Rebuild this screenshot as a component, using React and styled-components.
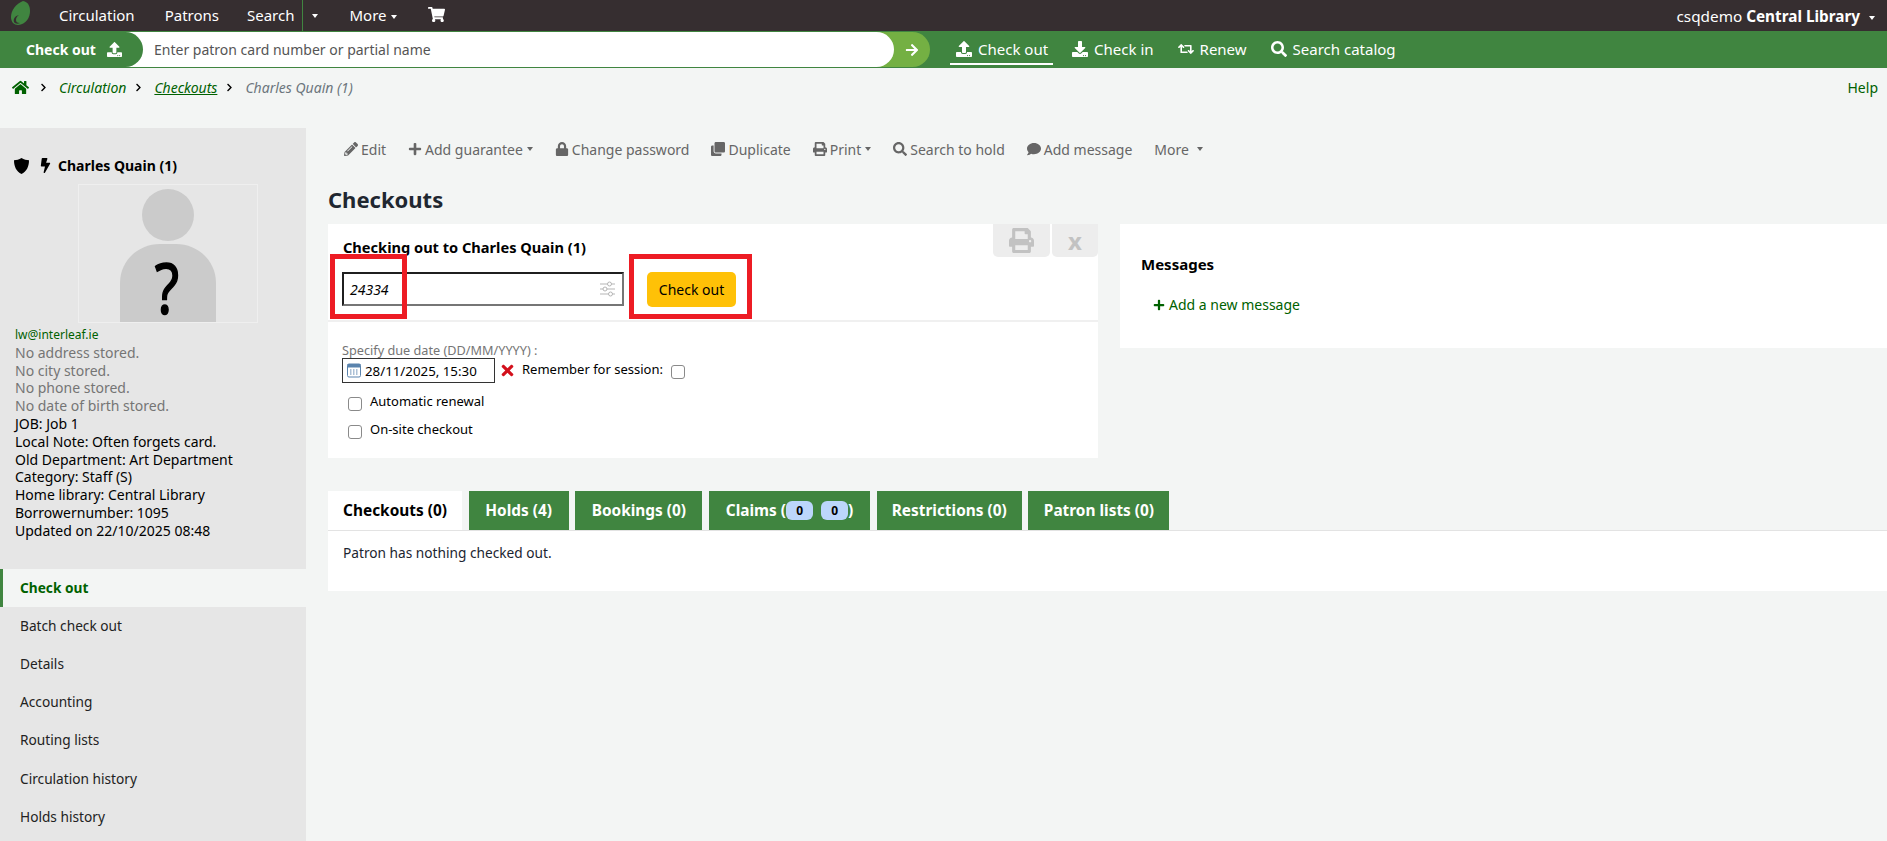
import React from "react";
import styled, { createGlobalStyle } from "styled-components";
import {
  FaHome,
  FaBolt,
  FaShoppingCart,
  FaUpload,
  FaDownload,
  FaRetweet,
  FaSearch,
  FaArrowRight,
  FaPencilAlt,
  FaPlus,
  FaLock,
  FaClone,
  FaPrint,
  FaComment,
  FaTimes,
  FaChevronRight,
} from "react-icons/fa";

const GlobalStyle = createGlobalStyle`
  html, body {
    margin: 0;
    height: 100%;
    overflow: hidden;
    background: #f3f5f4;
    font-family: "Noto Sans", sans-serif;
    font-size: 14px;
    color: #000;
  }
`;

const Caret = styled.span`
  display: inline-block;
  width: 0;
  height: 0;
  margin-left: ${(p) => p.$gap || 4}px;
  border-top: 4px solid currentColor;
  border-left: 3.5px solid transparent;
  border-right: 3.5px solid transparent;
  vertical-align: 2px;
`;

const TopBar = styled.nav`
  display: flex;
  align-items: center;
  height: 31px;
  background: #362e30;
  color: #fff;
  font-size: 15px;
  padding: 0 12px 0 11px;
`;

const Logo = styled.svg`
  width: 19px;
  height: 24px;
  margin-right: 29px;
  margin-top: -6px;
`;

const TopLink = styled.span`
  margin-right: ${(p) => p.$gap}px;
  line-height: 31px;
`;

const SplitCaret = styled.span`
  display: flex;
  align-items: center;
  height: 31px;
  border-left: 1px solid #408540;
  margin: 0 31px 0 -22px;
  padding-left: 5px;
`;

const CartIcon = styled(FaShoppingCart)`
  font-size: 17px;
  margin-top: -3px;
`;

const LibraryMenu = styled.span`
  margin-left: auto;
  font-size: 15.3px;
  b {
    font-weight: 700;
  }
`;

const SearchBar = styled.div`
  display: flex;
  align-items: center;
  height: 37px;
  background: #408540;
  color: #fff;
`;

const SearchForm = styled.div`
  display: flex;
  align-items: stretch;
  width: 930px;
  height: 35px;
  background: #74b043;
  border-radius: 0 18px 18px 0;
`;

const SearchLabel = styled.div`
  display: flex;
  align-items: center;
  gap: 11px;
  width: 143px;
  padding-left: 26px;
  box-sizing: border-box;
  background: #408540;
  font-weight: 700;
  font-size: 14px;
  border-radius: 0 18px 18px 0;
  margin-right: -18px;
  position: relative;
  z-index: 1;
  svg {
    font-size: 15px;
  }
`;

const SearchInput = styled.div`
  width: 769px;
  padding-left: 29px;
  box-sizing: border-box;
  background: #fff;
  border-radius: 0 18px 18px 0;
  line-height: 35px;
  color: #555;
  font-size: 14px;
`;

const SearchGo = styled.div`
  display: flex;
  align-items: center;
  justify-content: center;
  flex: 1;
  font-size: 14px;
`;

const QuickLinks = styled.div`
  display: flex;
  align-items: center;
  margin-left: 20px;
  gap: 13px;
  font-size: 15px;
`;

const QuickLink = styled.span`
  display: flex;
  align-items: center;
  gap: 6px;
  padding: 1px 5px 0 6px;
  height: 27px;
  border-bottom: 2px solid ${(p) => (p.$active ? "#fff" : "transparent")};
  svg {
    font-size: 16px;
  }
`;

const Crumbs = styled.div`
  display: flex;
  align-items: center;
  height: 60px;
  padding: 0 9px 22px 12px;
  box-sizing: border-box;
  font-size: 14px;
  font-style: italic;
  color: #006100;
`;

const Chevron = styled(FaChevronRight)`
  font-size: 9px;
  color: #000;
  margin: 0 11px 0 8px;
`;

const HomeIcon = styled(FaHome)`
  font-size: 17px;
  color: #006100;
  margin-right: 2px;
`;

const CrumbLink = styled.span`
  text-decoration: ${(p) => (p.$underline ? "underline" : "none")};
`;

const CrumbCurrent = styled.span`
  color: #6c757d;
`;

const HelpLink = styled.span`
  margin-left: auto;
  font-style: normal;
`;

const Layout = styled.div`
  display: flex;
  align-items: stretch;
  height: 713px;
`;

const Sidebar = styled.aside`
  flex: 0 0 306px;
  background: #e6e6e6;
  padding-top: 28px;
  box-sizing: border-box;
`;

const PatronName = styled.h5`
  display: flex;
  align-items: center;
  margin: 0 0 9px 14px;
  font-size: 14px;
  font-weight: 700;
  line-height: 19px;
  svg {
    margin-right: 5px;
  }
`;

const ShieldIcon = styled.svg`
  width: 15px;
  height: 16px;
  && {
    margin-right: 9px;
  }
`;

const BoltIcon = styled(FaBolt)`
  font-size: 15px;
`;

const Photo = styled.div`
  width: 180px;
  height: 139px;
  margin-left: 78px;
  border: 1px solid #efefef;
  box-sizing: border-box;
  svg {
    display: block;
    overflow: visible;
  }
`;

const PatronInfo = styled.div`
  margin: 3px 0 0 15px;
  font-size: 14px;
  line-height: 17.8px;
`;

const Email = styled.div`
  color: #006100;
  font-size: 12px;
`;

const Missing = styled.div`
  color: #757575;
`;

const SideMenu = styled.ul`
  list-style: none;
  margin: 29px 0 0;
  padding: 0;
`;

const SideItem = styled.li`
  height: 38.2px;
  line-height: 38px;
  padding-left: ${(p) => (p.$active ? 17 : 20)}px;
  font-size: 13.7px;
  box-sizing: border-box;
  color: ${(p) => (p.$active ? "#006100" : "#222")};
  font-weight: ${(p) => (p.$active ? 700 : 400)};
  background: ${(p) => (p.$active ? "#f3f5f4" : "transparent")};
  border-left: ${(p) => (p.$active ? "3px solid #408540" : "0")};
`;

const Main = styled.main`
  flex: 1;
  min-width: 0;
  padding-left: 22px;
`;

const Toolbar = styled.div`
  display: flex;
  align-items: center;
  height: 20px;
  margin: 11px 0 0 16px;
  gap: 22px;
  color: #666;
  font-size: 14px;
`;

const ToolButton = styled.span`
  display: flex;
  align-items: center;
  gap: 3px;
  svg {
    font-size: 14px;
  }
`;

const Title = styled.h1`
  margin: 25px 0 10px;
  font-size: 22px;
  line-height: 30px;
  font-weight: 700;
  color: #1f2730;
`;

const Columns = styled.div`
  display: flex;
  align-items: flex-start;
  gap: 22px;
`;

const CheckoutPanel = styled.section`
  flex: 0 0 770px;
  background: #fff;
  position: relative;
`;

const PanelTop = styled.div`
  height: 98px;
  padding: 13px 0 0 14px;
  box-sizing: border-box;
  border-bottom: 2px solid #f0f0f0;
`;

const PanelTitle = styled.div`
  font-size: 14.6px;
  font-weight: 700;
  line-height: 20px;
  margin: 0 0 15px 1px;
`;

const BarcodeRow = styled.div`
  display: flex;
  align-items: flex-start;
  gap: 23px;
`;

const BarcodeInput = styled.div`
  display: flex;
  align-items: center;
  justify-content: space-between;
  width: 282px;
  height: 34px;
  padding: 0 7px 0 6px;
  box-sizing: border-box;
  border: 2px solid;
  border-color: #1f1f1f #767676 #767676 #1f1f1f;
  font-style: italic;
  font-size: 14px;
`;

const AmberButton = styled.div`
  width: 89px;
  height: 35px;
  background: #ffc107;
  border-radius: 5px;
  text-align: center;
  line-height: 35px;
  font-size: 14px;
`;

const CornerTabs = styled.div`
  position: absolute;
  top: 0;
  right: 0;
  display: flex;
  gap: 2px;
`;

const CornerTab = styled.div`
  display: flex;
  align-items: center;
  justify-content: center;
  width: ${(p) => p.$w}px;
  height: 33px;
  background: #ededed;
  border-radius: 0 0 5px 5px;
  color: #c2c2c2;
  font-size: 24px;
  line-height: 28px;
  font-weight: 700;
  svg {
    font-size: 25px;
  }
`;

const Annotation = styled.div`
  position: absolute;
  top: 30px;
  left: ${(p) => p.$left}px;
  width: ${(p) => p.$w}px;
  height: 65px;
  border: 5px solid #ed1c24;
  box-sizing: border-box;
`;

const DueSection = styled.div`
  height: 136px;
  padding: 21px 0 0 14px;
  box-sizing: border-box;
`;

const DueLabel = styled.div`
  font-size: 12.7px;
  line-height: 15px;
  color: #757575;
`;

const DueRow = styled.div`
  display: flex;
  align-items: flex-start;
`;

const DateInput = styled.div`
  display: flex;
  align-items: center;
  gap: 4px;
  width: 153px;
  height: 25px;
  padding-left: 4px;
  box-sizing: border-box;
  border: 1px solid #333;
  font-size: 13.3px;
`;

const ClearIcon = styled(FaTimes)`
  color: #d3101c;
  font-size: 17px;
  margin: 4px 6px 0 4px;
`;

const Check = styled.span`
  flex: none;
  display: block;
  width: 14px;
  height: 14px;
  box-sizing: border-box;
  border: 1px solid #8a8a8a;
  border-radius: 3px;
  background: #fff;
  margin: ${(p) => p.$m || 0};
`;

const CheckLabel = styled.span`
  font-size: 13px;
  line-height: 18px;
  margin-top: ${(p) => p.$top || 0}px;
`;

const CheckRow = styled.div`
  display: flex;
  align-items: flex-start;
  gap: 8px;
  height: 28px;
  margin: ${(p) => p.$top || 0}px 0 0 6px;
`;

const MessagesPanel = styled.section`
  flex: 1;
  height: 124px;
  background: #fff;
  padding: 29px 0 0 21px;
  box-sizing: border-box;
`;

const MessagesTitle = styled.div`
  font-size: 15px;
  font-weight: 700;
  line-height: 22px;
`;

const AddMessage = styled.div`
  display: flex;
  align-items: center;
  gap: 4px;
  margin: 20px 0 0 12px;
  color: #006100;
  font-size: 14px;
  line-height: 20px;
  svg {
    font-size: 12px;
  }
`;

const Tabs = styled.div`
  display: flex;
  align-items: flex-end;
  gap: 6.7px;
  margin-top: 33px;
  height: 39px;
  border-bottom: 1px solid #e3e3e3;
`;

const Tab = styled.div`
  display: flex;
  align-items: center;
  justify-content: center;
  width: ${(p) => p.$w}px;
  height: 39px;
  box-sizing: border-box;
  font-size: 15.4px;
  font-weight: 700;
  color: ${(p) => (p.$active ? "#000" : "#fff")};
  background: ${(p) => (p.$active ? "#fff" : "#408540")};
`;

const Badge = styled.span`
  display: inline-block;
  width: 27px;
  height: 19px;
  line-height: 19px;
  text-align: center;
  border-radius: 6px;
  background: #bcd6fb;
  color: #000;
  font-size: 12px;
  margin-right: ${(p) => p.$mr || 0}px;
`;

const TabBody = styled.div`
  height: 60px;
  background: #fff;
  padding: 12px 15px 0;
  box-sizing: border-box;
  font-size: 13.7px;
  line-height: 20px;
  color: #1b2530;
`;

const tools = [
  { icon: <FaPencilAlt />, label: "Edit" },
  { icon: <FaPlus />, label: "Add guarantee", caret: true },
  { icon: <FaLock />, label: "Change password" },
  { icon: <FaClone />, label: "Duplicate" },
  { icon: <FaPrint />, label: "Print", caret: true },
  { icon: <FaSearch />, label: "Search to hold" },
  { icon: <FaComment />, label: "Add message" },
];

const menu = [
  "Batch check out",
  "Details",
  "Accounting",
  "Routing lists",
  "Circulation history",
  "Holds history",
];

function App() {
  return (
    <>
      <GlobalStyle />
      <TopBar>
        <Logo viewBox="0 0 19 24">
          <path
            d="M12 0C5 3 0 9 0 16c0 5 3 8 7 8 8-1 12-7 12-14 0-5-2-9-7-10z"
            fill="#408540"
          />
          <path d="M8 14c-4 1-6 4-5 7 1 2 4 2 6 1-3 0-4-1-4-3 0-2 1-4 3-5z" fill="#362e30" />
        </Logo>
        <TopLink $gap={30}>Circulation</TopLink>
        <TopLink $gap={28}>Patrons</TopLink>
        <TopLink $gap={30}>Search</TopLink>
        <SplitCaret>
          <Caret $gap={0} />
        </SplitCaret>
        <TopLink $gap={31}>
          More
          <Caret />
        </TopLink>
        <CartIcon />
        <LibraryMenu>
          csqdemo <b>Central Library</b>
          <Caret $gap={9} />
        </LibraryMenu>
      </TopBar>

      <SearchBar>
        <SearchForm>
          <SearchLabel>
            Check out <FaUpload />
          </SearchLabel>
          <SearchInput>Enter patron card number or partial name</SearchInput>
          <SearchGo>
            <FaArrowRight />
          </SearchGo>
        </SearchForm>
        <QuickLinks>
          <QuickLink $active>
            <FaUpload /> Check out
          </QuickLink>
          <QuickLink>
            <FaDownload /> Check in
          </QuickLink>
          <QuickLink>
            <FaRetweet /> Renew
          </QuickLink>
          <QuickLink>
            <FaSearch /> Search catalog
          </QuickLink>
        </QuickLinks>
      </SearchBar>

      <Crumbs>
        <HomeIcon />
        <Chevron />
        <CrumbLink>Circulation</CrumbLink>
        <Chevron />
        <CrumbLink $underline>Checkouts</CrumbLink>
        <Chevron />
        <CrumbCurrent>Charles Quain (1)</CrumbCurrent>
        <HelpLink>Help</HelpLink>
      </Crumbs>

      <Layout>
        <Sidebar>
          <PatronName>
            <ShieldIcon viewBox="0 0 15 16">
              <path d="M7.500 0C10 1.500 12.500 2.200 15 2.300 15 9 12.500 13.500 7.500 16 2.500 13.500 0 9 0 2.300 2.500 2.200 5 1.500 7.500 0z" />
            </ShieldIcon>
            <BoltIcon />
            Charles Quain (1)
          </PatronName>
          <Photo>
            <svg width="178" height="137" viewBox="0 0 178 137">
              <circle cx="89" cy="30" r="26" fill="#cbcbcb" />
              <path
                d="M41 137V98c0-22 18-39 40-39h16c22 0 40 17 40 39v39z"
                fill="#cbcbcb"
              />
              <text
                transform="translate(88 129) scale(0.8 1)"
                fontSize="70"
                textAnchor="middle"
                stroke="#000"
                strokeWidth="1.5"
                fontFamily="Noto Sans, sans-serif"
              >
                ?
              </text>
            </svg>
          </Photo>
          <PatronInfo>
            <Email>lw@interleaf.ie</Email>
            <Missing>No address stored.</Missing>
            <Missing>No city stored.</Missing>
            <Missing>No phone stored.</Missing>
            <Missing>No date of birth stored.</Missing>
            <div>JOB: Job 1</div>
            <div>Local Note: Often forgets card.</div>
            <div>Old Department: Art Department</div>
            <div>Category: Staff (S)</div>
            <div>Home library: Central Library</div>
            <div>Borrowernumber: 1095</div>
            <div>Updated on 22/10/2025 08:48</div>
          </PatronInfo>
          <SideMenu>
            <SideItem $active>Check out</SideItem>
            {menu.map((item) => (
              <SideItem key={item}>{item}</SideItem>
            ))}
          </SideMenu>
        </Sidebar>

        <Main>
          <Toolbar>
            {tools.map((t) => (
              <ToolButton key={t.label}>
                {t.icon}
                {t.label}
                {t.caret && <Caret $gap={1} />}
              </ToolButton>
            ))}
            <ToolButton>
              More
              <Caret $gap={5} />
            </ToolButton>
          </Toolbar>
          <Title>Checkouts</Title>
          <Columns>
            <CheckoutPanel>
              <PanelTop>
                <PanelTitle>Checking out to Charles Quain (1)</PanelTitle>
                <BarcodeRow>
                  <BarcodeInput>
                    24334
                    <svg width="15" height="16" viewBox="0 0 15 16" fill="#fff" stroke="#b5b5b5">
                      <path d="M0 3h15M0 8h15M0 13h15" />
                      <circle cx="9.500" cy="3" r="2" />
                      <circle cx="5" cy="8" r="2" />
                      <circle cx="10.500" cy="13" r="2" />
                    </svg>
                  </BarcodeInput>
                  <AmberButton>Check out</AmberButton>
                </BarcodeRow>
              </PanelTop>
              <CornerTabs>
                <CornerTab $w={57}>
                  <FaPrint />
                </CornerTab>
                <CornerTab $w={46}>x</CornerTab>
              </CornerTabs>
              <Annotation $left={2} $w={77} />
              <Annotation $left={301} $w={123} />
              <DueSection>
                <DueLabel>Specify due date (DD/MM/YYYY) :</DueLabel>
                <DueRow>
                  <DateInput>
                    <svg width="14" height="15" viewBox="0 0 14 15">
                      <rect x="0.5" y="1" width="13" height="13" rx="1.5" fill="#fff" stroke="#5a83ad" />
                      <rect x="0.5" y="1" width="13" height="3.5" fill="#5a83ad" />
                      <path
                        d="M3 7h1.500M6 7h1.500M9 7h1.500M3 9h1.500M6 9h1.500M9 9h1.500M3 11h1.500M6 11h1.500M9 11h1.500"
                        stroke="#5a83ad"
                      />
                    </svg>
                    28/11/2025, 15:30
                  </DateInput>
                  <ClearIcon />
                  <CheckLabel $top={2}>Remember for session:</CheckLabel>
                  <Check $m="7px 0 0 8px" />
                </DueRow>
                <CheckRow $top={9}>
                  <Check $m="5px 0 0" />
                  <CheckLabel>Automatic renewal</CheckLabel>
                </CheckRow>
                <CheckRow>
                  <Check $m="5px 0 0" />
                  <CheckLabel>On-site checkout</CheckLabel>
                </CheckRow>
              </DueSection>
            </CheckoutPanel>
            <MessagesPanel>
              <MessagesTitle>Messages</MessagesTitle>
              <AddMessage>
                <FaPlus />
                Add a new message
              </AddMessage>
            </MessagesPanel>
          </Columns>
          <Tabs>
            <Tab $active $w={134}>
              Checkouts (0)
            </Tab>
            <Tab $w={100}>Holds (4)</Tab>
            <Tab $w={127}>Bookings (0)</Tab>
            <Tab $w={161}>
              Claims (<Badge $mr={8}>0</Badge>
              <Badge>0</Badge>)
            </Tab>
            <Tab $w={145}>Restrictions (0)</Tab>
            <Tab $w={141}>Patron lists (0)</Tab>
          </Tabs>
          <TabBody>Patron has nothing checked out.</TabBody>
        </Main>
      </Layout>
    </>
  );
}

export default App;
